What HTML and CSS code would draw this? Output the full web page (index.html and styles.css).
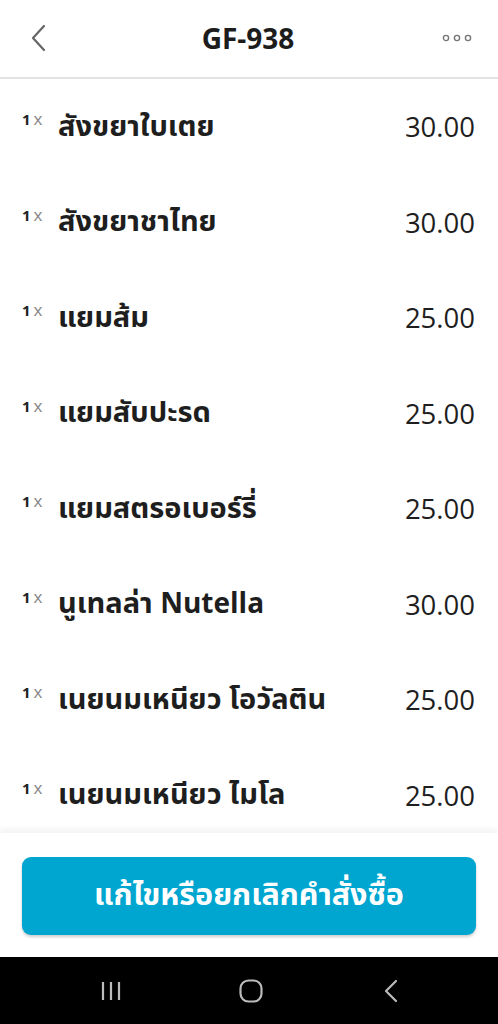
FILE: index.html
```html
<!DOCTYPE html>
<html lang="th">
<head>
<meta charset="utf-8">
<link rel="stylesheet" href="styles.css">
</head>
<body>
<div class="app">
  <header class="topbar">
    <svg class="back" width="20" height="30" viewBox="0 0 20 30"><path d="M16 3 L5 15 L16 27" fill="none" stroke="#666" stroke-width="2.2" stroke-linecap="round" stroke-linejoin="round"/></svg>
    <h1 class="title">GF-938</h1>
    <svg class="more" width="30" height="10" viewBox="0 0 30 10"><circle cx="4" cy="5" r="2.6" fill="none" stroke="#777" stroke-width="1.4"/><circle cx="15" cy="5" r="2.6" fill="none" stroke="#777" stroke-width="1.4"/><circle cx="26" cy="5" r="2.6" fill="none" stroke="#777" stroke-width="1.4"/></svg>
  </header>
  <main class="list">
    <div class="row"><span class="qty">1<span class="x">x</span></span><span class="name">สังขยาใบเตย</span><span class="price">30.00</span></div>
    <div class="row"><span class="qty">1<span class="x">x</span></span><span class="name">สังขยาชาไทย</span><span class="price">30.00</span></div>
    <div class="row"><span class="qty">1<span class="x">x</span></span><span class="name">แยมส้ม</span><span class="price">25.00</span></div>
    <div class="row"><span class="qty">1<span class="x">x</span></span><span class="name">แยมสับปะรด</span><span class="price">25.00</span></div>
    <div class="row"><span class="qty">1<span class="x">x</span></span><span class="name">แยมสตรอเบอร์รี่</span><span class="price">25.00</span></div>
    <div class="row"><span class="qty">1<span class="x">x</span></span><span class="name">นูเทลล่า <span class="latin">Nutella</span></span><span class="price">30.00</span></div>
    <div class="row"><span class="qty">1<span class="x">x</span></span><span class="name">เนยนมเหนียว โอวัลติน</span><span class="price">25.00</span></div>
    <div class="row"><span class="qty">1<span class="x">x</span></span><span class="name">เนยนมเหนียว ไมโล</span><span class="price">25.00</span></div>
  </main>
  <footer class="actions">
    <button class="cta">แก้ไขหรือยกเลิกคำสั่งซื้อ</button>
  </footer>
  <nav class="sysnav">
    <svg width="24" height="22" viewBox="0 0 24 22"><path d="M4 2v18M12 2v18M20 2v18" stroke="#bbb" stroke-width="2.2"/></svg>
    <svg width="24" height="24" viewBox="0 0 24 24"><rect x="1.5" y="1.5" width="21" height="21" rx="8" fill="none" stroke="#bbb" stroke-width="2.2"/></svg>
    <svg width="16" height="24" viewBox="0 0 16 24"><path d="M13 2 L3 12 L13 22" fill="none" stroke="#bbb" stroke-width="2.2" stroke-linecap="round" stroke-linejoin="round"/></svg>
  </nav>
</div>
</body>
</html>
```

FILE: styles.css
```css
* { box-sizing: border-box; }
html, body { margin: 0; padding: 0; }
body {
  font-family: "Noto Sans Thai", "Noto Sans", "Open Sans", sans-serif;
  color: #1e1e1e;
  background: #fff;
}
.app {
  width: 498px;
  height: 1024px;
  display: flex;
  flex-direction: column;
  overflow: hidden;
}
.topbar {
  height: 79px;
  flex: none;
  display: flex;
  align-items: center;
  justify-content: space-between;
  padding: 0 26px 2px 28px;
  border-bottom: 2px solid #e3e3e3;
}
.title {
  margin: 0;
  font-family: "Open Sans", "Noto Sans", sans-serif;
  font-weight: 700;
  font-size: 28px;
  color: #1c1c1c;
  padding-left: 6px;
}
.list {
  flex: 1;
  overflow: hidden;
}
.row {
  height: 95.5px;
  display: flex;
  align-items: center;
  padding: 0 23px 0 22px;
}
.qty {
  font-family: "Open Sans", "Noto Sans", sans-serif;
  font-size: 15px;
  font-weight: 700;
  color: #222;
  margin-top: -16px;
  width: 36px;
  flex: none;
}
.x {
  color: #858585;
  font-weight: 400;
  font-size: 17px;
  margin-left: 3px;
}
.name {
  flex: 1;
  font-size: 29px;
  font-weight: 700;
  color: #1e1e1e;
}
.latin {
  font-size: 28px;
}
.price {
  font-family: "Open Sans", "Noto Sans", sans-serif;
  font-size: 27.5px;
  color: #1e1e1e;
}
.actions {
  flex: none;
  height: 124px;
  padding: 24px 22px 0 22px;
  box-shadow: 0 -4px 6px rgba(0,0,0,0.05);
  background: #fff;
}
.cta {
  width: 100%;
  height: 78px;
  border: none;
  border-radius: 9px;
  background: #00a5d0;
  color: #fff;
  font-family: "Noto Sans Thai", "Noto Sans", sans-serif;
  font-size: 30.5px;
  font-weight: 700;
  box-shadow: 0 2px 3px rgba(0,0,0,0.2);
}
.sysnav {
  flex: none;
  height: 67px;
  background: #000;
  display: grid;
  grid-template-columns: 140px 140px 140px;
  justify-items: center;
  align-items: center;
  padding-left: 41px;
}
```
